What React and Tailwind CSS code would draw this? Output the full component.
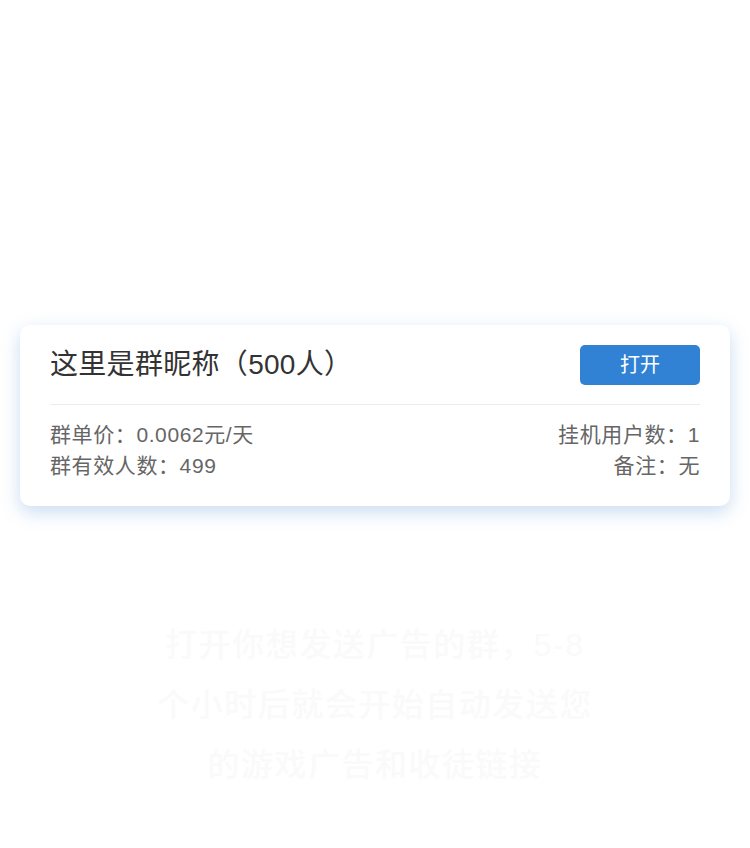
import React from "react";

const group = {
  name: "这里是群昵称",
  members: 500,
  price: "0.0062元/天",
  valid: 499,
  hangUsers: 1,
  remark: "无",
};

export default function App() {
  return (
    <div
      className="min-h-[848px] w-[750px] bg-white px-5 pt-[325px]"
      style={{ fontFamily: '"Liberation Sans", "Noto Sans CJK SC", sans-serif' }}
    >
      <div className="rounded-[10px] bg-white px-[30px] shadow-[0_6px_18px_rgba(60,130,210,0.28)]">
        <div className="flex items-center justify-between border-b border-[#ececec] pt-5 pb-[19px]">
          <span className="text-[28px] leading-10 tracking-[0.3px] text-[#333]">
            {group.name}（{group.members}人）
          </span>
          <button className="h-10 w-[120px] rounded-[5px] bg-[#3182d5] text-[20px] text-white">
            打开
          </button>
        </div>
        <div className="flex justify-between pt-[14px] pb-[25px] text-[21px] leading-[31px] tracking-[0.6px] text-[#666]">
          <div>
            <p>群单价：{group.price}</p>
            <p>群有效人数：{group.valid}</p>
          </div>
          <div className="text-right">
            <p>挂机用户数：{group.hangUsers}</p>
            <p>备注：{group.remark}</p>
          </div>
        </div>
      </div>
      <div className="mx-auto mt-[109px] w-[470px] text-center text-[32px] font-medium leading-[60px] tracking-[1.5px] text-[#fafafa]">
        <p>打开你想发送广告的群，5-8</p>
        <p>个小时后就会开始自动发送您</p>
        <p>的游戏广告和收徒链接</p>
      </div>
    </div>
  );
}
